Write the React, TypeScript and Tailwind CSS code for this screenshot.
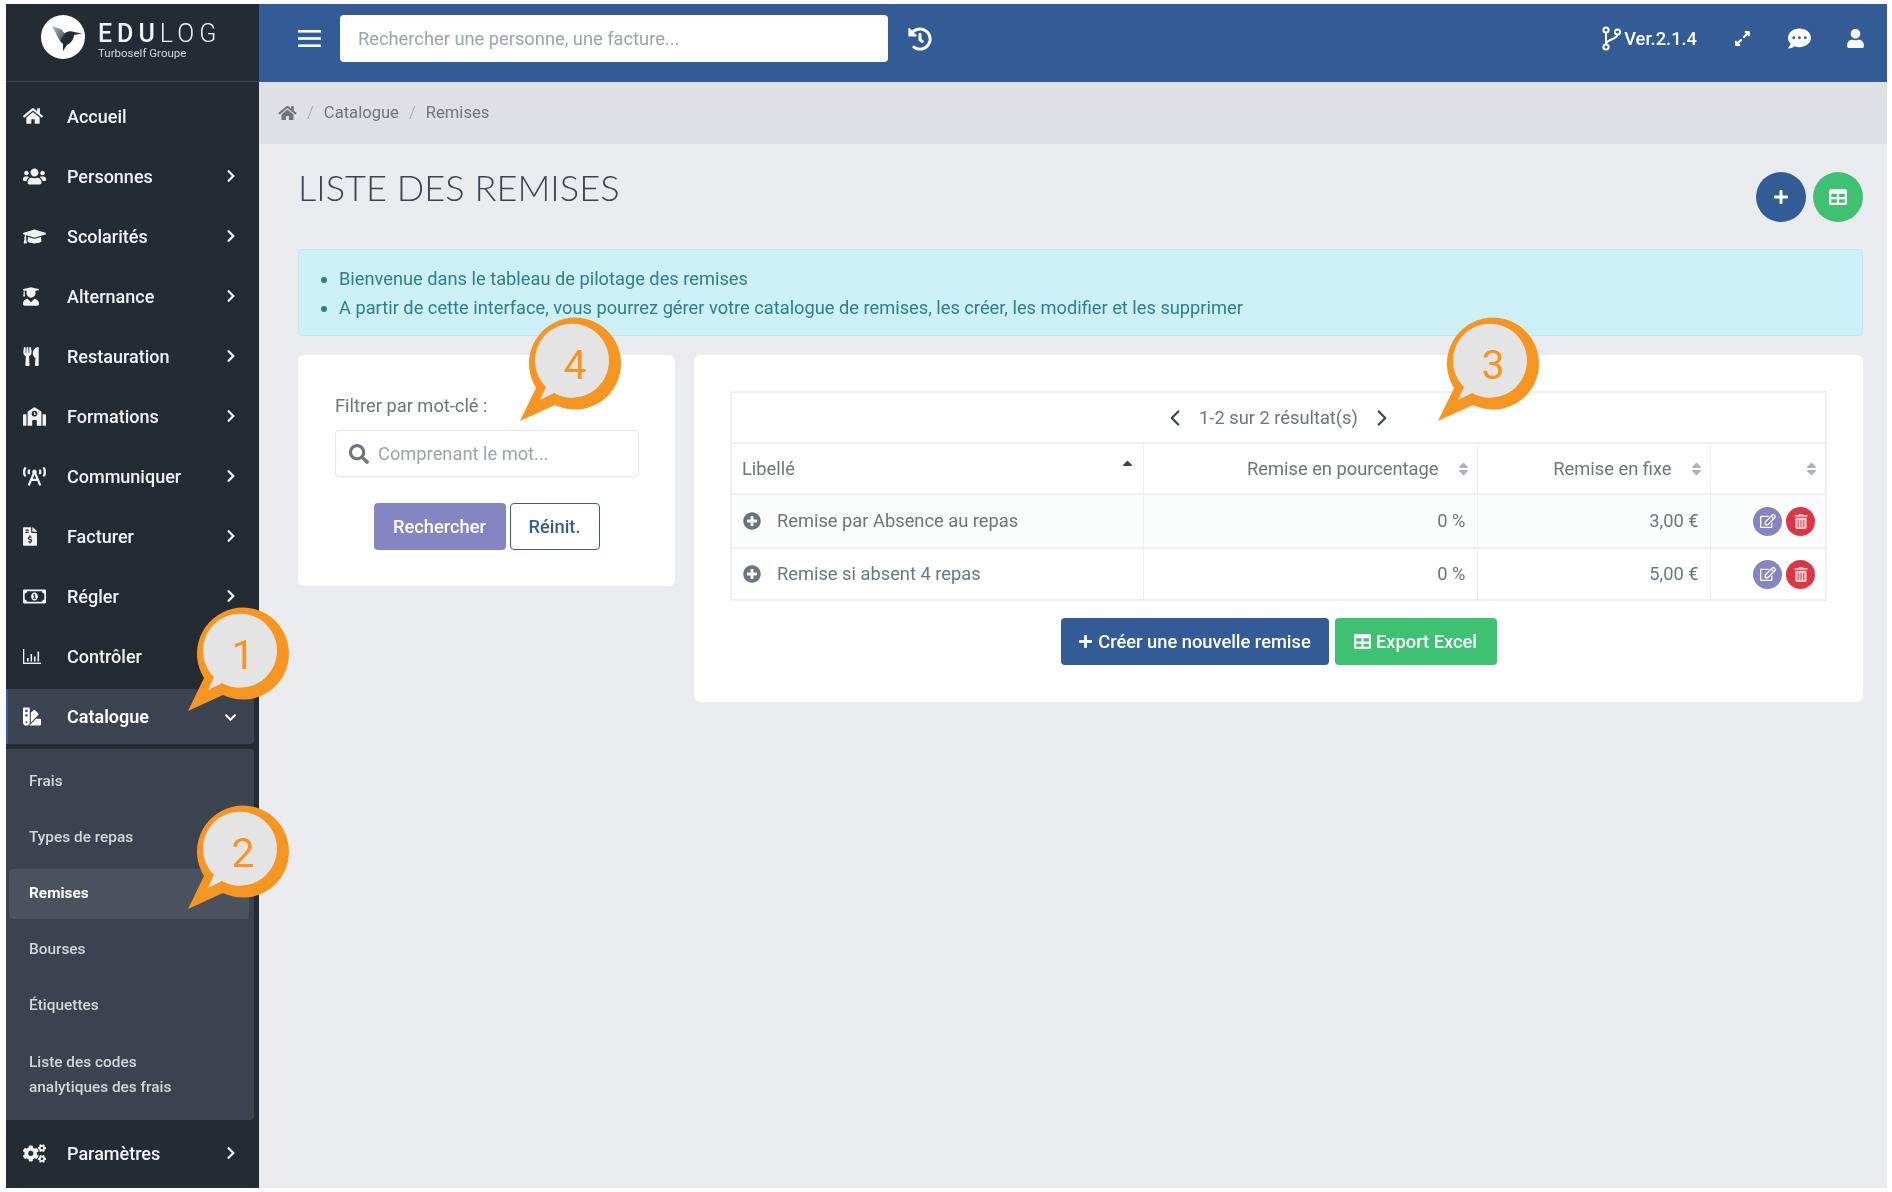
import {
  FaBroadcastTower,
  FaChevronDown,
  FaChevronRight,
  FaCogs,
  FaCommentDots,
  FaExpandAlt,
  FaFileInvoiceDollar,
  FaGraduationCap,
  FaHistory,
  FaHome,
  FaPlus,
  FaPlusCircle,
  FaRegEdit,
  FaRegMoneyBillAlt,
  FaSchool,
  FaSearch,
  FaSort,
  FaSortUp,
  FaSwatchbook,
  FaTable,
  FaTrashAlt,
  FaUser,
  FaUserGraduate,
  FaUsers,
  FaUtensils,
} from "react-icons/fa"
import { ChevronLeft, ChevronRight } from "lucide-react"
import type { ComponentType } from "react"

type IconComp = ComponentType<{ className?: string }>

function ThinChart({ className }: { className?: string }) {
  return (
    <svg viewBox="0 0 18 15" fill="currentColor" className={className}>
      <rect x="0" y="0" width="1.3" height="15" />
      <rect x="0" y="13.6" width="18" height="1.4" />
      <rect x="4" y="9" width="1.6" height="3.5" />
      <rect x="7.5" y="5" width="1.6" height="7.5" />
      <rect x="11" y="7.5" width="1.6" height="5" />
      <rect x="14.5" y="2.5" width="1.6" height="10" />
    </svg>
  )
}

const topMenu: { label: string; icon: IconComp; size: string; arrow?: boolean }[] = [
  { label: "Accueil", icon: FaHome, size: "h-[18px] w-[20px]" },
  { label: "Personnes", icon: FaUsers, size: "h-[19px] w-[23px]", arrow: true },
  { label: "Scolarités", icon: FaGraduationCap, size: "h-[19px] w-[23px]", arrow: true },
  { label: "Alternance", icon: FaUserGraduate, size: "h-[19px] w-[16px]", arrow: true },
  { label: "Restauration", icon: FaUtensils, size: "h-[19px] w-[16px]", arrow: true },
  { label: "Formations", icon: FaSchool, size: "h-[19px] w-[23px]", arrow: true },
  { label: "Communiquer", icon: FaBroadcastTower, size: "h-[19px] w-[23px]", arrow: true },
  { label: "Facturer", icon: FaFileInvoiceDollar, size: "h-[19px] w-[14px]", arrow: true },
  { label: "Régler", icon: FaRegMoneyBillAlt, size: "h-[19px] w-[23px]", arrow: true },
  { label: "Contrôler", icon: ThinChart, size: "h-[15px] w-[18px]" },
]

const subMenu = ["Frais", "Types de repas", "Remises", "Bourses", "Étiquettes"]

const rows = [
  { label: "Remise par Absence au repas", pct: "0 %", fixed: "3,00 €", rowClass: "h-[54px] bg-[#fbfcfc]" },
  { label: "Remise si absent 4 repas", pct: "0 %", fixed: "5,00 €", rowClass: "h-[52px]" },
]

function MenuItem({ label, icon: Icon, size, arrow }: { label: string; icon: IconComp; size: string; arrow?: boolean }) {
  return (
    <div className="flex h-[60px] items-center text-[#f1f2f4]">
      <span className="flex w-[61px] justify-start pl-[17px]">
        <Icon className={size} />
      </span>
      <span className="flex-1 text-[18px] font-medium">{label}</span>
      {arrow && <FaChevronRight className="mr-[23px] h-[14px] w-[10px]" />}
    </div>
  )
}

function Bubble({ n, className }: { n: number; className: string }) {
  return (
    <svg viewBox="-60 -50 110 115" className={`absolute h-[115px] w-[110px] ${className}`}>
      <path d="M-40 24 L-56 57 L-21 41 A46 46 0 1 0 -40 24 Z" fill="#f6951f" />
      <path d="M-30 23 L-36 36 L-22 29 A37 37 0 1 0 -30 23 Z" fill="#e4e4e4" />
      <text x="-1" y="15" textAnchor="middle" fontSize="41" fontFamily="Roboto, sans-serif" fontWeight="400" fill="#f6951f">
        {n}
      </text>
    </svg>
  )
}

function SortIcon() {
  return <FaSort className="h-[16px] w-[11px] text-[#adb3ba]" />
}

export default function App() {
  return (
    <div className="relative flex h-[1192px] w-[1892px] overflow-hidden bg-white pb-[4px] pl-[6px] pr-[5px] pt-[4px] font-['Roboto',sans-serif] blur-[0.5px]">
      {/* sidebar */}
      <aside className="flex w-[253px] shrink-0 flex-col bg-[#242b33]">
        <div className="flex h-[78px] items-center border-b border-[#3a424c] pb-[12px] pl-[35px]">
          <svg viewBox="0 0 44 44" className="h-[44px] w-[44px] shrink-0">
            <defs>
              <linearGradient id="wing" x1="0" y1="0" x2="1" y2="1">
                <stop offset="0" stopColor="#b9bdc1" />
                <stop offset="1" stopColor="#3a424c" />
              </linearGradient>
            </defs>
            <circle cx="22" cy="22" r="22" fill="#fff" />
            <path d="M11 11 L20 14 L25 20 L19 26 Z" fill="url(#wing)" />
            <path d="M24 18 C27 16 31 16 33 17 L41 18.5 L33 20 C33 24 30 28 26 30 L22 36 L22 29 L19 26 Z" fill="#242b33" />
          </svg>
          <div className="ml-[13px] mt-[8px] flex flex-col">
            <span className="text-[25px] leading-[25px] tracking-[5px] text-[#f1f2f4]">
              <span className="font-medium">EDU</span>
              <span className="font-light">LOG</span>
            </span>
            <span className="text-[11.5px] leading-[14px] text-[#d5d8dc]">Turboself Groupe</span>
          </div>
        </div>
        <nav className="flex flex-1 flex-col pt-[4px]">
          {topMenu.map((m) => (
            <MenuItem key={m.label} {...m} />
          ))}
          <div className="flex h-[60px] items-center pr-[5px]">
            <div className="flex h-[55px] flex-1 items-center rounded-r-[4px] border-l-2 border-[#335c96] bg-[#3a434f] text-white">
              <span className="flex w-[59px] pl-[15px]">
                <FaSwatchbook className="h-[19px] w-[18px]" />
              </span>
              <span className="flex-1 text-[18px] font-semibold">Catalogue</span>
              <FaChevronDown className="mr-[17px] mt-[2px] h-[13px] w-[13px]" />
            </div>
          </div>
          <div className="mr-[5px] mt-[3px] flex h-[371px] flex-col gap-[6px] rounded-r-[4px] bg-[#3a434f] pt-[8px] text-[15.4px] font-medium text-[#d3d6da]">
            {subMenu.map((s) =>
              s === "Remises" ? (
                <div key={s} className="ml-[3px] mr-[5px] flex h-[50px] items-center rounded-[4px] bg-[#4a525d] pl-[20px] font-bold text-white">
                  {s}
                </div>
              ) : (
                <div key={s} className="flex h-[50px] items-center pl-[23px]">
                  {s}
                </div>
              )
            )}
            <div className="flex h-[75px] items-center pl-[23px] leading-[25px]">
              Liste des codes
              <br />
              analytiques des frais
            </div>
          </div>
          <div className="mt-[3px]">
            <MenuItem label="Paramètres" icon={FaCogs} size="h-[19px] w-[23px]" arrow />
          </div>
        </nav>
      </aside>

      {/* main */}
      <main className="flex min-w-0 flex-1 flex-col bg-[#e9ebef]">
        <header className="flex h-[78px] shrink-0 items-center bg-[#335c96] pb-[9px] text-white">
          <svg viewBox="0 0 23 17" fill="currentColor" className="ml-[39px] h-[17px] w-[23px]">
            <rect width="23" height="2.6" />
            <rect y="7.2" width="23" height="2.6" />
            <rect y="14.4" width="23" height="2.6" />
          </svg>
          <div className="ml-[19px] flex h-[47px] w-[548px] items-center rounded-[4px] bg-white pl-[18px] text-[18.3px] text-[#9aa2ae]">
            Rechercher une personne, une facture...
          </div>
          <FaHistory className="ml-[20px] h-[24px] w-[24px]" />
          <div className="ml-auto flex items-center">
            <svg viewBox="0 0 19 25" fill="none" stroke="currentColor" strokeWidth="2" className="h-[25px] w-[19px]">
              <circle cx="4" cy="4" r="2.6" />
              <circle cx="4" cy="21" r="2.6" />
              <circle cx="15.5" cy="6" r="2.6" />
              <path d="M4 6.6 V18.4 M15.5 8.6 C15.5 14 4 13 4 18" />
            </svg>
            <span className="ml-[3px] text-[18.3px] font-medium">Ver.2.1.4</span>
            <FaExpandAlt className="ml-[37px] h-[17px] w-[17px]" />
            <FaCommentDots className="ml-[36px] h-[23px] w-[25px]" />
            <FaUser className="ml-[35px] mr-[23px] h-[19px] w-[17px]" />
          </div>
        </header>

        <div className="flex h-[62px] shrink-0 items-center gap-[10px] bg-[#dde0e5] pl-[19px] text-[16.6px] text-[#6c757d]">
          <FaHome className="h-[16px] w-[19px]" />
          <span className="text-[#adb3ba]">/</span>
          <span>Catalogue</span>
          <span className="text-[#adb3ba]">/</span>
          <span>Remises</span>
        </div>

        <div className="flex flex-1 flex-col pl-[39px] pr-[24px]">
          <div className="flex h-[105px] shrink-0 items-start justify-between">
            <h1 className="mt-[21px] font-['Lato',sans-serif] text-[36.2px] font-light leading-[44px] text-[#3a444f]">LISTE DES REMISES</h1>
            <div className="mt-[28px] flex gap-[7px]">
              <button className="flex h-[50px] w-[50px] items-center justify-center rounded-full bg-[#335c96] text-white">
                <FaPlus className="h-[16px] w-[16px]" />
              </button>
              <button className="flex h-[50px] w-[50px] items-center justify-center rounded-full bg-[#3fc172] text-white">
                <FaTable className="h-[18px] w-[18px]" />
              </button>
            </div>
          </div>

          <div className="flex h-[87px] shrink-0 items-center rounded-[4px] border border-[#bfe9f0] bg-[#cdf0f6] pl-[22px] text-[18.25px] leading-[29px] text-[#2b7f8e]">
            <ul className="list-disc pl-[18px]">
              <li>Bienvenue dans le tableau de pilotage des remises</li>
              <li>A partir de cette interface, vous pourrez gérer votre catalogue de remises, les créer, les modifier et les supprimer</li>
            </ul>
          </div>

          <div className="mt-[19px] flex items-start gap-[19px]">
            {/* filtre */}
            <section className="flex h-[231px] w-[377px] shrink-0 flex-col rounded-[6px] bg-white px-[37px] pt-[39px]">
              <label className="text-[18.3px] leading-[24px] text-[#6c757d]">Filtrer par mot-clé :</label>
              <div className="mt-[12px] flex h-[47px] w-[304px] items-center rounded-[4px] border border-[#e3e8ec] pl-[13px] text-[18.3px] text-[#9aa2ae]">
                <FaSearch className="h-[20px] w-[20px] text-[#6c757d]" />
                <span className="ml-[9px]">Comprenant le mot...</span>
              </div>
              <div className="mt-[26px] flex justify-center gap-[4px]">
                <button className="h-[47px] w-[132px] rounded-[4px] bg-[#8585c3] text-[18.3px] font-medium text-white">Rechercher</button>
                <button className="h-[47px] w-[90px] rounded-[4px] border border-[#335c96] bg-white text-[18.3px] font-medium text-[#335c96]">Réinit.</button>
              </div>
            </section>

            {/* liste */}
            <section className="flex h-[347px] flex-1 flex-col rounded-[6px] bg-white px-[36px] pt-[36px]">
              <table className="w-full table-fixed border-collapse border-2 border-[#edf0f2] text-[18.3px] text-[#6c757d]">
                <colgroup>
                  <col className="w-[412px]" />
                  <col className="w-[334px]" />
                  <col className="w-[233px]" />
                  <col />
                </colgroup>
                <thead>
                  <tr className="h-[51px] border-b-2 border-[#edf0f2]">
                    <th colSpan={4} className="font-normal">
                      <div className="flex items-center justify-center">
                        <ChevronLeft className="h-[26px] w-[26px] text-[#3a444f]" strokeWidth={2} />
                        <span className="mx-[11px]">1-2 sur 2 résultat(s)</span>
                        <ChevronRight className="h-[26px] w-[26px] text-[#3a444f]" strokeWidth={2} />
                      </div>
                    </th>
                  </tr>
                  <tr className="h-[51px] border-b-2 border-[#edf0f2]">
                    <th className="border-r border-[#edf0f2] px-[10px] text-left font-normal">
                      <div className="flex items-center justify-between">
                        Libellé
                        <FaSortUp className="mb-[3px] h-[16px] w-[11px] text-[#3a444f]" />
                      </div>
                    </th>
                    <th className="border-r border-[#edf0f2] pr-[8px] font-normal">
                      <div className="flex items-center justify-end gap-[19px]">
                        Remise en pourcentage
                        <SortIcon />
                      </div>
                    </th>
                    <th className="border-r border-[#edf0f2] pr-[8px] font-normal">
                      <div className="flex items-center justify-end gap-[19px]">
                        Remise en fixe
                        <SortIcon />
                      </div>
                    </th>
                    <th className="pr-[8px] font-normal">
                      <div className="flex justify-end">
                        <SortIcon />
                      </div>
                    </th>
                  </tr>
                </thead>
                <tbody>
                  {rows.map((r) => (
                    <tr key={r.label} className={`border-b-2 border-[#edf0f2] ${r.rowClass}`}>
                      <td className="border-r border-[#edf0f2] pl-[11px] pr-[10px]">
                        <div className="flex items-center">
                          <FaPlusCircle className="h-[18px] w-[18px] text-[#6c757d]" />
                          <span className="ml-[16px]">{r.label}</span>
                        </div>
                      </td>
                      <td className="border-r border-[#edf0f2] pr-[11px] text-right">{r.pct}</td>
                      <td className="border-r border-[#edf0f2] pr-[11px] text-right">{r.fixed}</td>
                      <td className="pr-[10px]">
                        <div className="flex justify-end gap-[4px]">
                          <button className="flex h-[29px] w-[29px] items-center justify-center rounded-full bg-[#8585c3] text-white">
                            <FaRegEdit className="h-[16px] w-[16px]" />
                          </button>
                          <button className="flex h-[29px] w-[29px] items-center justify-center rounded-full bg-[#dc3545] text-[#f6c9cd]">
                            <FaTrashAlt className="h-[15px] w-[14px]" />
                          </button>
                        </div>
                      </td>
                    </tr>
                  ))}
                </tbody>
              </table>
              <div className="mt-[17px] flex justify-center gap-[6px] text-[18.3px] font-medium text-white">
                <button className="flex h-[47px] w-[268px] items-center justify-center gap-[5px] rounded-[4px] bg-[#335c96]">
                  <FaPlus className="h-[15px] w-[15px]" />
                  Créer une nouvelle remise
                </button>
                <button className="flex h-[47px] w-[162px] items-center justify-center gap-[5px] rounded-[4px] bg-[#3fc172]">
                  <FaTable className="h-[17px] w-[17px]" />
                  Export Excel
                </button>
              </div>
            </section>
          </div>
        </div>
      </main>

      <Bubble n={1} className="left-[184px] top-[604px]" />
      <Bubble n={2} className="left-[184px] top-[802px]" />
      <Bubble n={3} className="left-[1434px] top-[314px]" />
      <Bubble n={4} className="left-[516px] top-[314px]" />
    </div>
  )
}
